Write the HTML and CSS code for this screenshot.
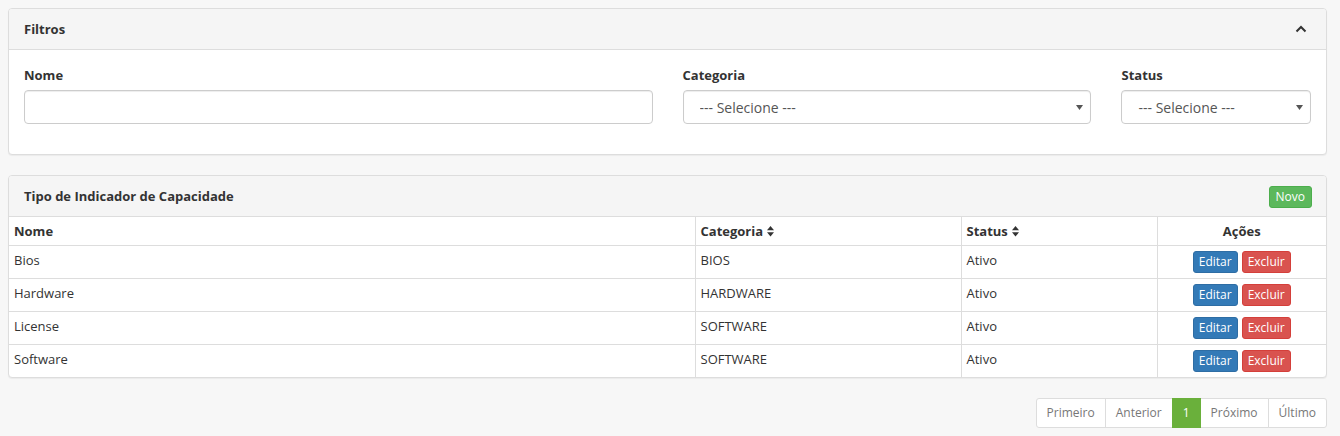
FILE: index.html
```html
<!DOCTYPE html>
<html lang="pt-BR">
<head>
<meta charset="utf-8">
<title>Tipo de Indicador de Capacidade</title>
<link rel="stylesheet" href="styles.css">
</head>
<body>
<div class="page">
  <div class="panel">
    <div class="panel-heading">
      <span class="panel-title">Filtros</span>
      <svg class="chevron" width="12" height="8" viewBox="0 0 12 8"><polyline points="1.5,6.5 6,2 10.5,6.5" fill="none" stroke="#333" stroke-width="2"/></svg>
    </div>
    <div class="panel-body">
      <div class="row">
        <div class="col col-6">
          <label class="lbl">Nome</label>
          <input class="form-control" type="text">
        </div>
        <div class="col col-4">
          <label class="lbl">Categoria</label>
          <div class="select-wrap">
            <select class="form-control select"><option>--- Selecione ---</option></select>
            <svg class="caret" width="7" height="5" viewBox="0 0 7 5"><polygon points="0,0 7,0 3.5,5" fill="#555"/></svg>
          </div>
        </div>
        <div class="col col-2">
          <label class="lbl">Status</label>
          <div class="select-wrap">
            <select class="form-control select"><option>--- Selecione ---</option></select>
            <svg class="caret" width="7" height="5" viewBox="0 0 7 5"><polygon points="0,0 7,0 3.5,5" fill="#555"/></svg>
          </div>
        </div>
      </div>
    </div>
  </div>

  <div class="panel">
    <div class="panel-heading">
      <span class="panel-title">Tipo de Indicador de Capacidade</span>
      <button class="btn btn-success">Novo</button>
    </div>
    <table class="table">
      <colgroup>
        <col class="c-nome"><col class="c-cat"><col class="c-status"><col class="c-acoes">
      </colgroup>
      <thead>
        <tr>
          <th>Nome</th>
          <th>Categoria <svg class="sort" width="7" height="11" viewBox="0 0 7 11"><polygon points="3.5,0 7,4.2 0,4.2" fill="#333"/><polygon points="0,6.3 7,6.3 3.5,10.5" fill="#333"/></svg></th>
          <th>Status <svg class="sort" width="7" height="11" viewBox="0 0 7 11"><polygon points="3.5,0 7,4.2 0,4.2" fill="#333"/><polygon points="0,6.3 7,6.3 3.5,10.5" fill="#333"/></svg></th>
          <th class="center">Ações</th>
        </tr>
      </thead>
      <tbody>
        <tr><td>Bios</td><td>BIOS</td><td>Ativo</td><td class="center"><div class="actions"><button class="btn btn-primary">Editar</button><button class="btn btn-danger">Excluir</button></div></td></tr>
        <tr><td>Hardware</td><td>HARDWARE</td><td>Ativo</td><td class="center"><div class="actions"><button class="btn btn-primary">Editar</button><button class="btn btn-danger">Excluir</button></div></td></tr>
        <tr><td>License</td><td>SOFTWARE</td><td>Ativo</td><td class="center"><div class="actions"><button class="btn btn-primary">Editar</button><button class="btn btn-danger">Excluir</button></div></td></tr>
        <tr><td>Software</td><td>SOFTWARE</td><td>Ativo</td><td class="center"><div class="actions"><button class="btn btn-primary">Editar</button><button class="btn btn-danger">Excluir</button></div></td></tr>
      </tbody>
    </table>
  </div>

  <div class="pager-row">
    <ul class="pagination">
      <li><a>Primeiro</a></li>
      <li><a>Anterior</a></li>
      <li class="active"><a>1</a></li>
      <li><a>Próximo</a></li>
      <li><a>Último</a></li>
    </ul>
  </div>
</div>
</body>
</html>
```
FILE: styles.css
```css
* { box-sizing: border-box; }
html, body { margin: 0; padding: 0; }
body {
  background: #f7f7f7;
  font-family: "Open Sans", "Liberation Sans", sans-serif;
  font-size: 13px;
  line-height: 1.42857;
  color: #333;
}
.page {
  width: 1335px;
  padding: 8px 0 0 8px;
}
.panel {
  width: 1319px;
  background: #fff;
  border: 1px solid #ddd;
  border-radius: 4px;
  margin-bottom: 20px;
  box-shadow: 0 1px 1px rgba(0,0,0,.05);
  overflow: hidden;
}
.panel-heading {
  display: flex;
  align-items: center;
  justify-content: space-between;
  height: 41px;
  padding: 0 15px;
  background: #f5f5f5;
  border-bottom: 1px solid #ddd;
}
.panel-title {
  font-weight: 700;
  font-size: 13px;
}
.chevron { margin-right: 4px; margin-top: -1px; }
.panel-body { padding: 15px; }
.row { display: flex; margin: 0 -15px; }
.col { padding: 0 15px; margin-bottom: 15px; }
.col-6 { width: 50%; }
.col-4 { width: 33.3333%; }
.col-2 { width: 16.6667%; }
.lbl {
  display: block;
  font-weight: 700;
  margin-bottom: 5px;
  line-height: 20px;
}
.form-control {
  display: block;
  width: 100%;
  height: 34px;
  padding: 6px 12px;
  font-family: inherit;
  font-size: 14px;
  color: #555;
  background: #fff;
  border: 1px solid #ccc;
  border-radius: 4px;
  box-shadow: inset 0 1px 1px rgba(0,0,0,.075);
  outline: none;
}
.select-wrap { position: relative; }
.select {
  appearance: none;
  -webkit-appearance: none;
  padding-left: 16px;
}
.caret {
  position: absolute;
  right: 8px;
  top: 15px;
  pointer-events: none;
}
.btn {
  display: inline-block;
  font-family: inherit;
  font-size: 12px;
  line-height: 18px;
  padding: 1px 5px;
  border: 1px solid transparent;
  border-radius: 3px;
  color: #fff;
  cursor: pointer;
}
.btn-success {
  background: #5cb85c;
  border-color: #4cae4c;
  margin-top: 1px;
  padding: 1px 6px;
  margin-right: -1px;
}
.btn-primary { background: #337ab7; border-color: #2e6da4; }
.btn-danger { background: #d9534f; border-color: #d43f3a; }
.table {
  width: 100%;
  border-collapse: collapse;
  table-layout: fixed;
}
.c-nome { width: 686px; }
.c-cat { width: 266px; }
.c-status { width: 196px; }
.c-acoes { width: 169px; }
.table th, .table td {
  padding: 5px;
  border: 1px solid #ddd;
  text-align: left;
  vertical-align: top;
  line-height: 18px;
}
.table th { font-weight: 700; }
.table tr > :first-child { border-left: 0; }
.table tr > :last-child { border-right: 0; }
.table thead tr:first-child th { border-top: 0; }
.table tbody tr:last-child td { border-bottom: 0; }
.table .center { text-align: center; }
.sort { vertical-align: -1px; margin-left: 1px; }
.actions { display: inline-flex; gap: 4px; }
.pager-row {
  width: 1319px;
  display: flex;
  justify-content: flex-end;
}
.pagination {
  display: flex;
  list-style: none;
  margin: 0;
  padding: 0;
}
.pagination li a {
  display: block;
  padding: 5px 10px;
  font-size: 12px;
  line-height: 18px;
  color: #777;
  background: #fff;
  border: 1px solid #ddd;
  margin-left: -1px;
}
.pagination li:first-child a { margin-left: 0; border-radius: 3px 0 0 3px; }
.pagination li:last-child a { border-radius: 0 3px 3px 0; }
.pagination li.active a {
  background: #6ab03b;
  border-color: #6ab03b;
  color: #fff;
  position: relative;
}
```
